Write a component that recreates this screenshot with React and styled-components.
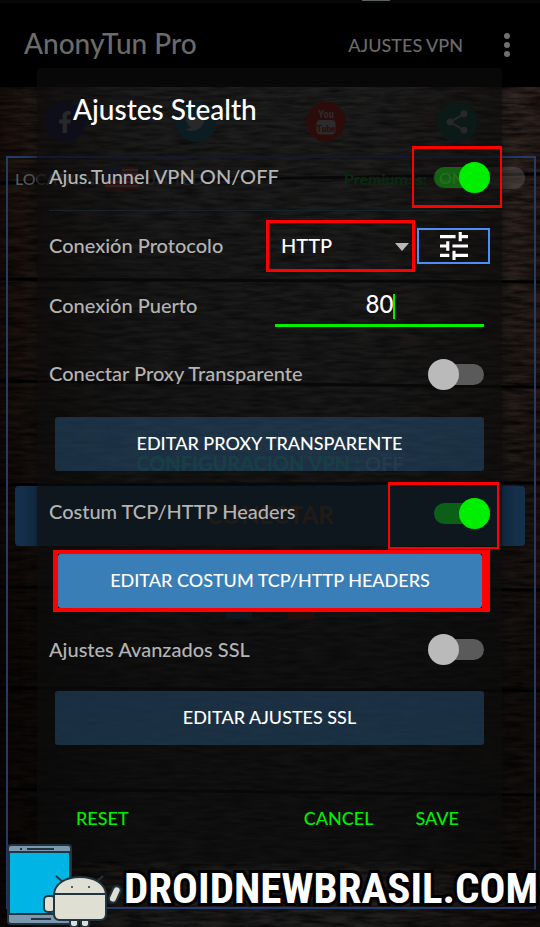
import React, { useState } from 'react'
import styled, { createGlobalStyle } from 'styled-components'
import { FaFacebookF, FaTwitter } from 'react-icons/fa'
import { MdShare } from 'react-icons/md'

function Switch({ id, label, checked, onChange }) {
    return <SwitchInput
        type="checkbox"
        role="switch"
        id={id}
        aria-label={label}
        checked={checked}
        onChange={onChange}
    />
}

function TuneIcon() {
    return (
        <svg width="28" height="28" viewBox="3 3 18 18" fill="#fff" aria-hidden="true">
            <path d="M3 17v2h6v-2H3zM3 5v2h10V5H3zm10 16v-2h8v-2h-8v-2h-2v6h2zM7 9v2H3v2h4v2h2V9H7zm14 4v-2H11v2h10zm-6-4h2V7h4V5h-4V3h-2v6z" />
        </svg>
    )
}

function WoodTexture() {
    return (
        <Wood aria-hidden="true" preserveAspectRatio="none">
            <filter id="grain" x="0" y="0" width="100%" height="100%">
                <feTurbulence type="fractalNoise" baseFrequency="0.04 0.26" numOctaves="5" seed="8" />
                <feColorMatrix values="0 0 0 0 0  0 0 0 0 0  0 0 0 0 0  1.3 0 0 0 -0.35" />
            </filter>
            <rect width="100%" height="100%" filter="url(#grain)" />
            <g stroke="#000" strokeWidth="3">
                <line x1="0" y1="96" x2="100%" y2="87" />
                <line x1="0" y1="192" x2="100%" y2="195" />
                <line x1="0" y1="294" x2="100%" y2="300" />
                <line x1="0" y1="398" x2="100%" y2="396" />
                <line x1="0" y1="500" x2="100%" y2="503" />
                <line x1="0" y1="601" x2="100%" y2="604" />
                <line x1="0" y1="702" x2="100%" y2="708" />
            </g>
        </Wood>
    )
}

function YoutubeIcon() {
    return (
        <svg width="42" height="44" viewBox="0 0 42 44" aria-hidden="true">
            <path fill="#7a0d0d" d="M14 1h14v2h4v3h4v3h3v5h2v4h1v8h-2v5h-2v4h-4v3h-4v3h-4v2H15v-2h-4v-3H7v-3H4v-4H2v-5H0v-8h1v-5h2V9h3V6h4V3h4z" />
            <text x="21" y="18" textAnchor="middle" fill="#777" fontSize="11" fontWeight="700" fontFamily="Roboto Condensed, Liberation Sans Narrow, sans-serif">You</text>
            <rect x="11" y="20" width="20" height="15" rx="4" fill="#777" />
            <text x="21" y="32" textAnchor="middle" fill="#7a0d0d" fontSize="10" fontWeight="700" fontFamily="Roboto Condensed, Liberation Sans Narrow, sans-serif">Tube</text>
        </svg>
    )
}

function Flag() {
    return (
        <svg width="33" height="22" viewBox="0 0 33 22" aria-hidden="true">
            <rect width="33" height="22" fill="#6b6060" />
            <path stroke="#7c1a1a" strokeWidth="2" d="M0 1h33M0 5h33M0 9h33M0 13h33M0 17h33M0 21h33" />
            <rect width="17" height="12" fill="#22285a" />
        </svg>
    )
}

function DroidLogo() {
    return (
        <svg width="116" height="84" viewBox="0 0 116 84" aria-hidden="true">
            <g stroke="#22343f" strokeWidth="2">
                <rect x="2" y="2" width="63" height="79" rx="3" fill="#7b98ae" />
                <rect x="3" y="9" width="61" height="62" fill="#00b5e6" />
                <path d="M21 6h27M25 76h20" />
                <path d="M14 6h2" />
            </g>
            <g fill="#dfe0d3" stroke="#22343f" strokeWidth="2">
                <path d="M50 33l8 7M97 33l-8 7" />
                <rect x="38" y="53" width="11" height="16" rx="4" />
                <path d="M64 76h8v5q0 3-4 3t-4-3zM75 76h8v5q0 3-4 3t-4-3z" />
                <path d="M48 51c1-10 11-17 26-17s25 7 26 17z" />
                <path d="M48 51h52v20q0 6-6 6H54q-6 0-6-6z" />
                <rect x="105" y="43" width="8" height="17" rx="4" transform="rotate(24 109 51)" />
            </g>
            <circle cx="66" cy="44" r="1" fill="#22343f" />
            <circle cx="83" cy="44" r="1" fill="#22343f" />
        </svg>
    )
}

function MainScreen() {
    return (
        <Screen>
            <StatusBar />
            <AppBar>
                <AppTitle>AnonyTun Pro</AppTitle>
                <BarButton type="button">AJUSTES VPN</BarButton>
                <BarButton type="button" aria-label="Menu">
                    <svg width="8" height="26" viewBox="0 0 8 26" fill="#707070">
                        <circle cx="4" cy="4" r="3" />
                        <circle cx="4" cy="13" r="3" />
                        <circle cx="4" cy="22" r="3" />
                    </svg>
                </BarButton>
            </AppBar>
            <Content>
                <WoodTexture />
                <Socials>
                    <SocialLink href="#facebook" aria-label="Facebook" $color="#161640"><FaFacebookF size={22} /></SocialLink>
                    <SocialLink href="#twitter" aria-label="Twitter" $color="#0a4458"><FaTwitter size={22} /></SocialLink>
                    <SocialLink href="#youtube" aria-label="YouTube"><YoutubeIcon /></SocialLink>
                    <SocialLink href="#share" aria-label="Share" $color="#0a3c30"><MdShare size={28} /></SocialLink>
                </Socials>
                <Frame>
                    <Location>
                        <span>LOCATION:</span>
                        <Flag />
                        <span>UNITED</span>
                        <Premium>Premium is:</Premium>
                        <PremiumSwitch>ON</PremiumSwitch>
                    </Location>
                    <VpnStatus>CONFIGURACION VPN : <span>OFF</span></VpnStatus>
                    <ConnectButton type="button">CONECTAR</ConnectButton>
                    <Markers>
                        <Marker $color="#123246" />
                        <Marker $color="#5a1414" />
                    </Markers>
                </Frame>
            </Content>
        </Screen>
    )
}

function App() {
    const [settings, setSettings] = useState({ tunnel: true, proxy: false, headers: true, ssl: false })
    const [protocol, setProtocol] = useState('HTTP')
    const [port, setPort] = useState('80')

    const toggle = name => () => setSettings({ ...settings, [name]: !settings[name] })

    return (
        <Page>
            <GlobalStyle />
            <MainScreen />
            <Dialog role="dialog" aria-labelledby="title">
                <DialogTitle id="title">Ajustes Stealth</DialogTitle>
                <Row $height={62}>
                    <Label htmlFor="tunnel">Ajus.Tunnel VPN ON/OFF</Label>
                    <SwitchMark>
                        <Switch id="tunnel" checked={settings.tunnel} onChange={toggle('tunnel')} />
                    </SwitchMark>
                </Row>
                <Divider />
                <Row $height={70} $end={12}>
                    <Label htmlFor="protocol">Conexión Protocolo</Label>
                    <SelectBox>
                        <Select id="protocol" value={protocol} onChange={e => setProtocol(e.target.value)}>
                            <option>HTTP</option>
                            <option>SSL</option>
                        </Select>
                        <Arrow width="14" height="8" viewBox="0 0 14 8"><path d="M0 0h14L7 8z" fill="#b9b9b9" /></Arrow>
                    </SelectBox>
                    <TuneButton type="button" aria-label="Opciones"><TuneIcon /></TuneButton>
                </Row>
                <Row $height={50} $end={18}>
                    <Label htmlFor="port">Conexión Puerto</Label>
                    <PortBox>
                        <PortInput id="port" value={port} onChange={e => setPort(e.target.value)} />
                        <Caret />
                    </PortBox>
                </Row>
                <Row $height={86} $end={12}>
                    <Label htmlFor="proxy">Conectar Proxy Transparente</Label>
                    <Switch id="proxy" checked={settings.proxy} onChange={toggle('proxy')} />
                </Row>
                <EditButton type="button">EDITAR PROXY TRANSPARENTE</EditButton>
                <HeadersRow $height={67} $end={3}>
                    <Label htmlFor="headers">Costum TCP/HTTP Headers</Label>
                    <SwitchMark $wide>
                        <Switch id="headers" checked={settings.headers} onChange={toggle('headers')} />
                    </SwitchMark>
                </HeadersRow>
                <ButtonMark>
                    <EditButton type="button" $active>EDITAR COSTUM TCP/HTTP HEADERS</EditButton>
                </ButtonMark>
                <SslRow $height={79} $end={12}>
                    <Label htmlFor="ssl">Ajustes Avanzados SSL</Label>
                    <Switch id="ssl" checked={settings.ssl} onChange={toggle('ssl')} />
                </SslRow>
                <EditButton type="button">EDITAR AJUSTES SSL</EditButton>
                <Actions>
                    <ActionButton type="button">RESET</ActionButton>
                    <Spacer />
                    <ActionButton type="button">CANCEL</ActionButton>
                    <ActionButton type="button">SAVE</ActionButton>
                </Actions>
            </Dialog>
            <Watermark>
                <DroidLogo />
                <SiteName>DROIDNEWBRASIL.COM</SiteName>
            </Watermark>
        </Page>
    )
}

const GlobalStyle = createGlobalStyle`
    * {
        box-sizing: border-box;
    }
    body {
        margin: 0;
        background: #000;
        color: #b4b4b4;
        font-family: Lato, "Liberation Sans", sans-serif;
        font-size: 20px;
        font-weight: 500;
    }
    button, input, select {
        font: inherit;
        color: inherit;
        margin: 0;
        padding: 0;
        border: 0;
        background: none;
    }
    h1, h2 {
        margin: 0;
        font-weight: 500;
    }
`;

/* the screen, the dialog and the watermark share one grid cell */
const Page = styled.div`
    display: grid;
    min-height: 100vh;
    overflow: hidden;
    > * {
        grid-area: 1 / 1;
        min-width: 0;
    }
`;

const Screen = styled.div`
    display: flex;
    flex-direction: column;
    color: #6b6b6b;
`;

const StatusBar = styled.div`
    height: 3px;
    background: #06080a;
    &::before{
        content: "";
        display: block;
        width: 28px;
        height: 1px;
        margin-left: 67%;
        background: #5c605c;
    }
`;

const AppBar = styled.header`
    display: flex;
    align-items: center;
    height: 84px;
    padding: 0 29px 0 24px;
    gap: 40px;
`;

const AppTitle = styled.h1`
    flex: 1;
    padding-bottom: 4px;
    font-size: 28px;
`;

const BarButton = styled.button`
    display: flex;
    color: #6b6b6b;
    font-size: 18px;
`;

const Content = styled.main`
    flex: 1;
    display: flex;
    flex-direction: column;
    position: relative;
    padding-bottom: 18px;
    background:
        linear-gradient(180deg, transparent 0, rgba(0, 0, 0, .25) 35%, rgba(0, 0, 0, .6) 70%, rgba(0, 0, 0, .6) 100%),
        linear-gradient(90deg, #1c100a 0, #4a4847 25%, #54504e 70%, #2e211b 100%);
`;

const Wood = styled.svg`
    position: absolute;
    inset: 0;
    width: 100%;
    height: 100%;
`;

const Socials = styled.nav`
    position: relative;
    display: grid;
    grid-template-columns: repeat(4, 1fr);
    place-items: center;
    height: 69px;
    padding-right: 18px;
`;

const SocialLink = styled.a`
    display: flex;
    align-items: center;
    justify-content: center;
    width: 40px;
    height: 40px;
    border-radius: 50%;
    color: #6b6b6b;
    background: ${props => props.$color || 'none'};
`;

const Frame = styled.section`
    position: relative;
    flex: 1;
    display: flex;
    flex-direction: column;
    margin: 0 4px 0 6px;
    padding: 0 9px 0 7px;
    border: 2px solid #223a6c;
`;

const Location = styled.div`
    display: flex;
    align-items: center;
    gap: 6px;
    height: 40px;
    color: #5a5a5a;
    font-size: 16px;
`;

const Premium = styled.span`
    margin-left: auto;
    color: #08701a;
    font-weight: 700;
`;

const PremiumSwitch = styled.span`
    width: 92px;
    height: 22px;
    padding-left: 6px;
    border-radius: 11px;
    color: #8a8a8a;
    line-height: 22px;
    background: rgba(110, 100, 95, .4);
`;

const VpnStatus = styled.p`
    margin: 246px 0 0;
    padding-bottom: 4px;
    line-height: 38px;
    text-align: center;
    color: #007028;
    font-size: 20px;
    font-weight: 700;
    span{
        color: #5a5a5a;
        font-weight: 500;
    }
`;

const ConnectButton = styled.button`
    height: 60px;
    padding-bottom: 4px;
    border-radius: 4px;
    background: #15304a;
    color: #56402f;
    font-size: 24px;
    font-weight: 700;
`;

const Markers = styled.div`
    display: flex;
    justify-content: center;
    gap: 36px;
    padding-top: 47px;
`;

const Marker = styled.span`
    width: 26px;
    height: 26px;
    background: ${props => props.$color};
`;

const Dialog = styled.section`
    position: relative;
    align-self: start;
    margin: 68px 38px 65px 37px;
    border-radius: 4px;
    background: rgba(12, 12, 12, .7);
    box-shadow: 0 0 16px rgba(0, 0, 0, .5);
`;

const DialogTitle = styled.h2`
    height: 78px;
    padding: 4px 36px 0;
    line-height: 74px;
    color: #fff;
    font-size: 28px;
`;

const Row = styled.div`
    display: flex;
    align-items: center;
    height: ${props => props.$height}px;
    padding-left: 12px;
    padding-right: ${props => props.$end || 0}px;
`;

const Label = styled.label`
    flex: 1;
    padding-bottom: 2px;
    white-space: nowrap;
`;

const HeadersRow = styled(Row)`
    margin: 11px 0 1px;
    ${Label}{
        padding-bottom: 10px;
    }
`;

const SslRow = styled(Row)`
    padding-bottom: 4px;
`;

const Divider = styled.hr`
    height: 1px;
    margin: 2px 18px 0 12px;
    border: 0;
    background: #17232a;
`;

const SwitchMark = styled.div`
    display: flex;
    align-items: center;
    justify-content: flex-end;
    align-self: stretch;
    width: ${props => props.$wide ? '111px' : '90px'};
    padding: ${props => props.$wide ? '0 7px 6px 0' : '0 10px 0 0'};
    border: solid #f00;
    border-width: ${props => props.$wide ? '3px 2px 2px' : '3px 2px'};
`;

const SwitchInput = styled.input`
    appearance: none;
    position: relative;
    width: 62px;
    height: 31px;
    &::before{
        content: "";
        position: absolute;
        inset: 5px 6px;
        border-radius: 11px;
        background: #5a5a5a;
    }
    &::after{
        content: "";
        position: absolute;
        top: 0;
        left: 0;
        width: 31px;
        height: 31px;
        border-radius: 50%;
        background: #bababa;
    }
    &:checked::before{
        background: rgba(10, 238, 10, .34);
    }
    &:checked::after{
        left: auto;
        right: 0;
        background: #00ee00;
    }
`;

const SelectBox = styled.div`
    position: relative;
    flex: 0 0 149px;
    height: 52px;
    margin-right: 2px;
    border: 3px solid #f00;
`;

const Select = styled.select`
    appearance: none;
    width: 100%;
    height: 100%;
    padding: 0 30px 2px 12px;
    color: #fff;
`;

const Arrow = styled.svg`
    position: absolute;
    right: 3px;
    top: 20px;
    pointer-events: none;
`;

const TuneButton = styled.button`
    display: flex;
    align-items: center;
    justify-content: center;
    width: 73px;
    height: 36px;
    border: 2px solid #4f8df7;
`;

const PortBox = styled.div`
    position: relative;
    flex: 0 0 209px;
`;

const PortInput = styled.input`
    display: block;
    width: 100%;
    height: 42px;
    padding-bottom: 2px;
    border-bottom: 3px solid #00ee00;
    outline: 0;
    color: #fff;
    font-size: 24px;
    text-align: center;
    caret-color: #00ee00;
`;

const Caret = styled.span`
    position: absolute;
    top: 9px;
    left: calc(50% + 13px);
    width: 2px;
    height: 25px;
    background: #00ee00;
`;

const EditButton = styled.button`
    display: block;
    width: calc(100% - 36px);
    height: 54px;
    margin: 0 18px;
    padding-bottom: 2px;
    border-radius: 3px;
    background: rgba(42, 92, 130, .45);
    color: #fff;
    font-size: 18px;
    ${props => props.$active && `
        width: 100%;
        margin: 0;
        background: #3a7eb8;
    `}
`;

const ButtonMark = styled.div`
    margin: 0 12px 0 16px;
    border: solid #f00;
    border-width: 4px 8px 4px 5px;
`;

const Actions = styled.div`
    display: flex;
    align-items: center;
    gap: 42px;
    padding: 61px 43px 32px 39px;
`;

const ActionButton = styled.button`
    line-height: 24px;
    color: #00ee00;
    font-size: 18px;
`;

const Spacer = styled.span`
    flex: 1;
`;

const Watermark = styled.footer`
    position: relative;
    align-self: end;
    display: flex;
    align-items: center;
    gap: 2px;
    padding-left: 6px;
    pointer-events: none;
`;

const SiteName = styled.strong`
    padding-top: 6px;
    color: #fff;
    font-family: "Liberation Sans Narrow", "Roboto Condensed", "Open Sans Condensed", "Liberation Sans", sans-serif;
    font-size: 43px;
    font-weight: 700;
    line-height: 50px;
    white-space: nowrap;
    paint-order: stroke fill;
    -webkit-text-stroke: 6px #000;
`;

export default App
